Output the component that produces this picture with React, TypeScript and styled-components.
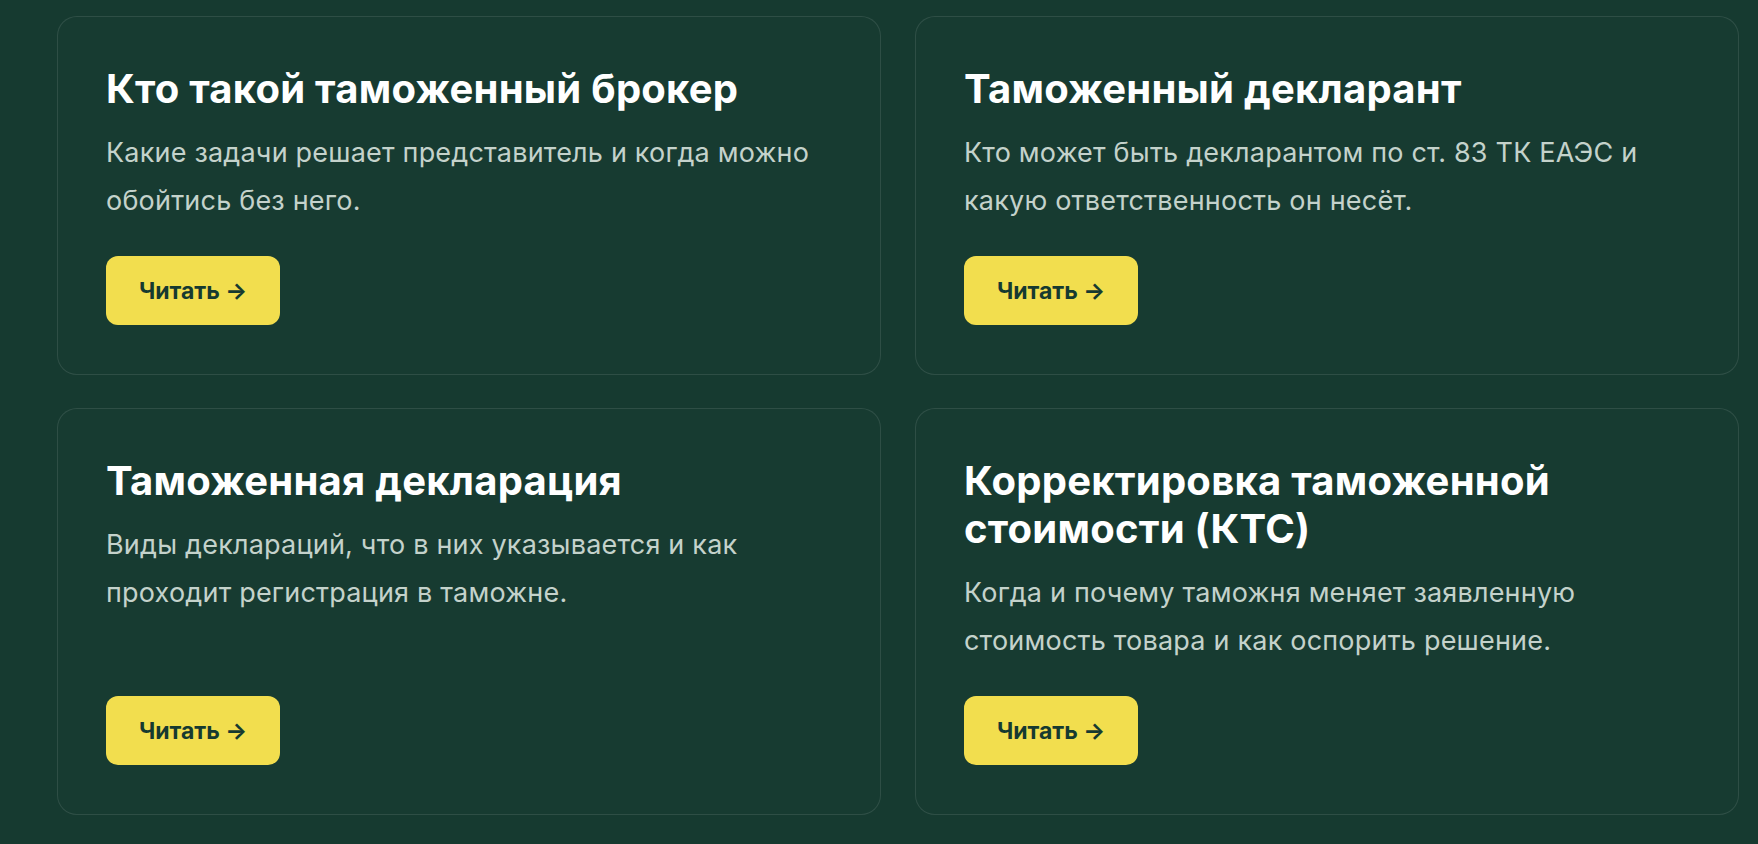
import styled, { createGlobalStyle } from "styled-components";

const GlobalStyle = createGlobalStyle`
  html, body {
    margin: 0;
    padding: 0;
    background: #163a30;
  }
  body {
    font-family: Inter, "Noto Sans", "Liberation Sans", sans-serif;
    -webkit-font-smoothing: antialiased;
  }
`;

const Page = styled.div`
  min-height: 844px;
  box-sizing: border-box;
  padding: 16px 19px 30px 57px;
  background: #163a30;
`;

const Grid = styled.div`
  display: grid;
  grid-template-columns: 1fr 1fr;
  column-gap: 34px;
  row-gap: 33px;
`;

const Card = styled.article`
  display: flex;
  flex-direction: column;
  align-items: flex-start;
  padding: 48px 48px 49px;
  border: 1px solid rgba(255, 255, 255, 0.1);
  border-radius: 20px;
  background: rgba(255, 255, 255, 0.008);
`;

const Title = styled.h3`
  margin: 0;
  font-size: 40px;
  line-height: 48px;
  font-weight: 700;
  letter-spacing: 0.25px;
  color: #ffffff;
`;

const Text = styled.p`
  margin: 16px 0 0;
  font-size: 27px;
  line-height: 48px;
  font-weight: 400;
  letter-spacing: 0.2px;
  color: #c4d2cb;
`;

const ReadButton = styled.a`
  display: inline-flex;
  align-items: center;
  justify-content: center;
  box-sizing: border-box;
  height: 69px;
  margin-top: auto;
  padding: 0 33px;
  border-radius: 12px;
  background: #f2de4e;
  color: #163a30;
  font-size: 23px;
  font-weight: 700;
  text-decoration: none;
  cursor: pointer;
`;

const Spacer = styled.div`
  height: 31px;
  flex-shrink: 0;
`;

type Article = {
  title: string;
  text: string;
};

const articles: Article[] = [
  {
    title: "Кто такой таможенный брокер",
    text: "Какие задачи решает представитель и когда можно обойтись без него.",
  },
  {
    title: "Таможенный декларант",
    text: "Кто может быть декларантом по ст. 83 ТК ЕАЭС и какую ответственность он несёт.",
  },
  {
    title: "Таможенная декларация",
    text: "Виды деклараций, что в них указывается и как проходит регистрация в таможне.",
  },
  {
    title: "Корректировка таможенной стоимости (КТС)",
    text: "Когда и почему таможня меняет заявленную стоимость товара и как оспорить решение.",
  },
];

export default function App() {
  return (
    <>
      <GlobalStyle />
      <Page>
        <Grid>
          {articles.map((item) => (
            <Card key={item.title}>
              <Title>{item.title}</Title>
              <Text>{item.text}</Text>
              <Spacer />
              <ReadButton>Читать →</ReadButton>
            </Card>
          ))}
        </Grid>
      </Page>
    </>
  );
}
